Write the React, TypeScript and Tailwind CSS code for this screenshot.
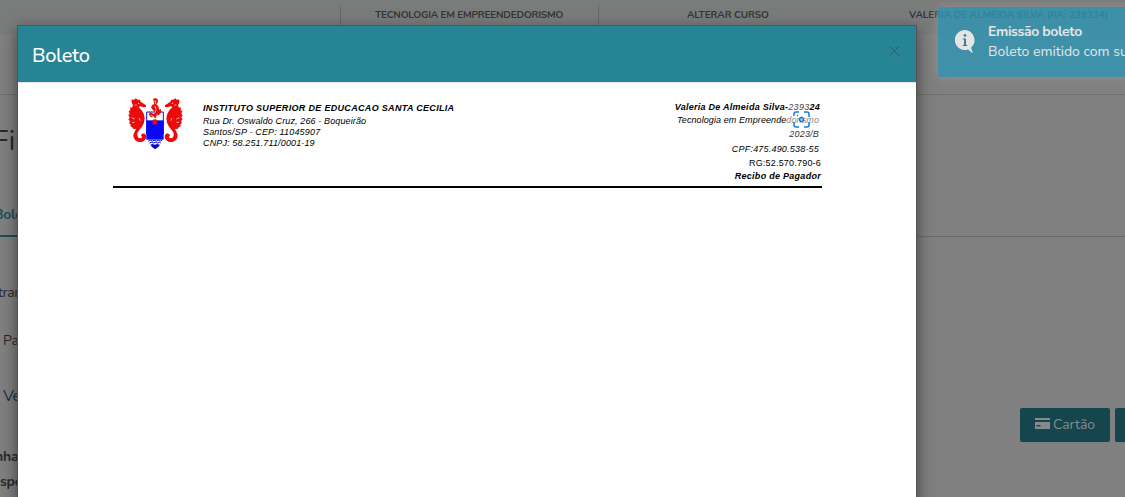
import React from "react";

function Crest() {
  return (
    <svg className="block h-[65px] w-[70px] shrink-0" viewBox="0 0 210 195" aria-label="Brasão">
      <defs>
        <g id="seahorse">
          <path
            fill="#ec0a0a"
            d="M37 28l5 2 5-5 6 4 7 0 2 6 9 6 7 5 0 5-8 1-10-4-4 4 9 9 6 10 3 13-2 14-6 12-8 10-6 9 0 9 4 6 7 1 4-4-4-3 2-6 7-2 6 5 1 8-5 8-8 5-11 0-9-5-5-8-1-9 4-9 4-8-9-1-3-5-5-2 1-6-5-4 3-5-5-6 4-5-4-8 4-3-3-9 5-2-1-9 6 1 3-7-4-8 0-8z"
          />
          <path d="M44 45l6 0M35 83l9 4M36 97l8 0M57 84l4 8" stroke="#fff" strokeWidth="2" fill="none" />
          <circle cx="56" cy="40" r="2" fill="#fff" />
        </g>
      </defs>
      <use href="#seahorse" />
      <use href="#seahorse" transform="translate(213 0) scale(-1 1)" />
      <path d="M80 66h50v66H80z" fill="#fff" stroke="#1010e8" strokeWidth="3" />
      <path d="M79 91h52v58H79z" fill="#0808f5" />
      <path d="M99 27l7-3 7 4 1 9-5 6 7 7 1 9 5-3 2 10-6 8-8 3-4 9-5-7-8 3-6-7 2-10 5 3 8 4 3-6-7-7-5-7 4-8 6-1z" fill="#ec0a0a" />
      <path d="M101 33l7 1-2 8M105 48l3 9-2 11M92 75l8 4M114 74l-6 5" stroke="#fff" strokeWidth="2" fill="none" />
      <path d="M97 91q8-6 15 0l-2 12-11 1z" fill="#ec0a0a" />
      <path d="M85 153l6-2 6 2 6-2 6 2 6-2 6 2 5-2M88 159l6-2 6 2 6-2 6 2 6-2 4 2" stroke="#0808d5" strokeWidth="3" fill="none" />
      <path d="M91 164l6-2 7 2 7-2 9 2-5 7-10 7-9-7z" fill="#0808d5" />
    </svg>
  );
}

function InfoIcon() {
  return (
    <svg className="block h-6 w-5" viewBox="0 0 20 24">
      <path d="M10 0a10 10 0 1 0 3 19.5L18 23.5l-2-6A10 10 0 0 0 10 0z" fill="#fff" />
      <circle cx="10" cy="5.4" r="1.4" fill="#2f7f99" />
      <path d="M7.8 8.5h3.2v6.5h1.3v.9H7.8V15H9V9.4H7.8z" fill="#2f7f99" />
    </svg>
  );
}

function CardIcon() {
  return (
    <svg className="mb-[3px] block h-[11px] w-[15px]" viewBox="0 0 15 11">
      <path fillRule="evenodd" fill="#858b8d" d="M0 0h15v2H0zM0 4h15v7H0zM1.5 7v1.5h4V7z" />
    </svg>
  );
}

function LensIcon() {
  return (
    <svg className="block h-[17px] w-[17px]" viewBox="0 0 17 17" fill="none" stroke="#167bd8" strokeWidth="1.5">
      <path d="M1 5V3q0-2 2-2h3M11 1h3q2 0 2 2v3M16 11v3q0 2-2 2h-3M6 16H3q-2 0-2-2v-3" />
      <circle cx="8.5" cy="8.5" r="2" />
      <path d="M4 4.5h1" />
    </svg>
  );
}

function PageBehind() {
  return (
    <div className="flex h-full flex-col">
      <header className="flex h-[35px] shrink-0 bg-[#7a7c7b] pt-[5px] text-[10px] font-bold leading-[21px] text-[#343637]">
        <div className="w-[340px] shrink-0" />
        <div className="w-[258px] shrink-0 whitespace-nowrap border-l border-[#666867] pl-[34px] tracking-[-0.2px]">TECNOLOGIA EM EMPREENDEDORISMO</div>
        <div className="w-[261px] shrink-0 whitespace-nowrap border-l border-[#666867] pl-[88px] tracking-[-0.08px]">ALTERAR CURSO</div>
        <div className="whitespace-nowrap pl-[50px] tracking-[-0.1px]">VALERIA DE ALMEIDA SILVA (RA: 239324)</div>
      </header>
      <div className="h-[60px] shrink-0 border-b border-[#707070]" />
      <div className="flex h-[142px] shrink-0 flex-col border-b border-[#6b6b6b]">
        <div className="-ml-[7px] mt-[26px] h-10 text-[28px] leading-10 text-[#282828]">Fin</div>
        <div className="-ml-[6px] mt-[42px] h-6 text-[14px] font-bold leading-6 tracking-[-0.4px] text-[#214f5b]">Bole</div>
        <div className="mt-[8px] h-[2px] w-24 shrink-0 bg-[#1c4e59]" />
      </div>
      <div className="flex flex-1">
        <div className="w-[1020px] shrink-0 text-[14px] leading-5 text-[#292929]">
          <div className="-ml-[2px] mt-[46px] h-5 tracking-[-0.3px]">tran</div>
          <div className="mt-[28px] h-5 pl-[3px]">Pa</div>
          <div className="mt-[35px] h-5 pl-[3px] text-[16px] tracking-[-0.5px] text-[#17303a]">Ve</div>
          <div className="-ml-[5px] mt-[41px] h-5 font-bold tracking-[-0.2px]">nha</div>
          <div className="mt-[5px] h-5 font-bold tracking-[-0.3px]">spo</div>
        </div>
        <div className="flex shrink-0 gap-[5px] pt-[171px]">
          <div className="flex h-[34px] w-[90px] items-center gap-[3px] rounded-[2px] bg-[#15454d] pl-[15px] text-[14px] leading-[34px] text-[#858b8d]">
            <CardIcon />
            <span>Cartão</span>
          </div>
          <div className="h-[34px] w-[90px] rounded-[2px] bg-[#15454d]" />
        </div>
      </div>
    </div>
  );
}

function Receipt() {
  return (
    <div className="ml-[95px] flex h-[105px] w-[709px] border-b-2 border-black font-['Liberation_Sans',Arial,sans-serif] text-[9px] italic leading-[11px] text-black">
      <div className="ml-[7px] mt-[7px] h-[65px] w-[70px] shrink-0">
        <Crest />
      </div>
      <div className="ml-[13px] mt-[20px] flex-1 whitespace-nowrap">
        <div className="h-[13px] font-bold tracking-[0.32px]">INSTITUTO SUPERIOR DE EDUCACAO SANTA CECILIA</div>
        <div className="tracking-[0.12px]">Rua Dr. Oswaldo Cruz, 266 - Boqueirão</div>
        <div className="tracking-[0.17px]">Santos/SP - CEP: 11045907</div>
        <div className="tracking-[0.14px]">CNPJ: 58.251.711/0001-19</div>
      </div>
      <div className="relative flex w-[160px] flex-col items-end whitespace-nowrap pt-[19px]">
        <div className="mr-[2px] h-[13px] font-bold tracking-[0.27px]">
          Valeria De Almeida Silva-<span className="font-normal text-[#444]">2393</span>24
        </div>
        <div className="mr-[3px] h-[14px] tracking-[0.09px]">
          Tecnologia em Empreende<span className="text-[#888]">dorismo</span>
        </div>
        <div className="mr-[3px] h-[15px] tracking-[0.2px] text-[#333]">2023/B</div>
        <div className="mr-[3px] h-[14px] tracking-[0.2px]">CPF:475.490.538-55</div>
        <div className="mr-[1px] h-[13px] not-italic tracking-[0.2px]">RG:52.570.790-6</div>
        <div className="mr-[1px] h-[13px] font-bold tracking-[0.28px]">Recibo de Pagador</div>
        <div className="absolute right-[12px] top-[28px]">
          <LensIcon />
        </div>
      </div>
    </div>
  );
}

export default function App() {
  return (
    <div className="relative h-[497px] w-[1125px] overflow-hidden bg-[#808080] font-[Nunito,Lato,sans-serif]">
      <PageBehind />
      <div className="absolute left-[17px] top-[25px] h-[500px] w-[900px] border border-[#555] bg-white shadow-[0_5px_15px_rgba(0,0,0,0.5)]">
        <div className="flex h-[57px] items-center justify-between border-b border-[#e5e5e5] bg-[#278495] pl-[14px] pr-[16px] text-white">
          <h4 className="pt-[3px] text-[20px] font-medium leading-7 tracking-[-0.35px]">Boleto</h4>
          <svg className="mb-[6px] h-[11px] w-[11px]" viewBox="0 0 11 11" fill="none">
            <path d="M1 2l9 9M10 2l-9 9" stroke="#579ca9" />
            <path d="M1 1l9 9M10 1l-9 9" stroke="#1f6977" strokeWidth="1.2" />
          </svg>
        </div>
        <Receipt />
      </div>
      <div className="absolute left-[938px] top-[7px] flex h-[70px] w-[300px] rounded-[3px] bg-[#2f96b4] pl-[17px] pt-[15px] text-[14px] leading-5 text-white opacity-80 shadow-[0_0_12px_#999]">
        <div className="mr-[13px] mt-[8px]">
          <InfoIcon />
        </div>
        <div className="whitespace-nowrap">
          <div className="font-bold tracking-[-0.38px]">Emissão boleto</div>
          <div>Boleto emitido com sucesso</div>
        </div>
      </div>
    </div>
  );
}
